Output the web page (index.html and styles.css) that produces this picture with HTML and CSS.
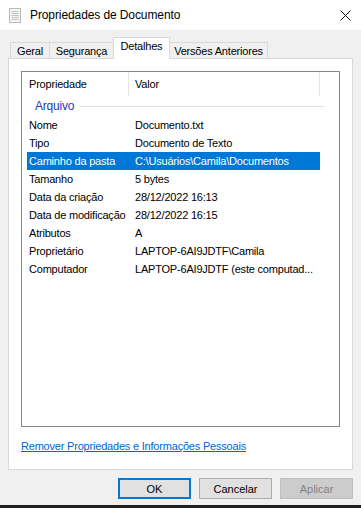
FILE: index.html
```html
<!DOCTYPE html>
<html lang="pt-BR">
<head>
    <meta charset="UTF-8">
    <title>Propriedades de Documento</title>
    <link rel="stylesheet" href="styles.css">
</head>
<body>
    <div class="window">
        <div class="titlebar">
            <svg class="title-icon" width="12" height="15" viewBox="0 0 12 15">
                <rect x="0.5" y="0.5" width="11" height="14" fill="#f4f4f4" stroke="#b9b9b9"/>
                <line x1="2.5" y1="3.5" x2="9.5" y2="3.5" stroke="#c4c4c4"/>
                <line x1="2.5" y1="5.5" x2="9.5" y2="5.5" stroke="#c4c4c4"/>
                <line x1="2.5" y1="7.5" x2="9.5" y2="7.5" stroke="#c4c4c4"/>
                <line x1="2.5" y1="9.5" x2="9.5" y2="9.5" stroke="#c4c4c4"/>
                <line x1="2.5" y1="11.5" x2="9.5" y2="11.5" stroke="#c4c4c4"/>
            </svg>
            <span class="title">Propriedades de Documento</span>
            <svg class="close" width="11" height="11" viewBox="0 0 11 11">
                <path d="M0.5 0.5 L10.5 10.5 M10.5 0.5 L0.5 10.5" stroke="#111" stroke-width="1"/>
            </svg>
        </div>

        <div class="content">
            <div class="tabs">
                <div class="tab tab-geral">Geral</div>
                <div class="tab tab-seg">Segurança</div>
                <div class="tab tab-det active">Detalhes</div>
                <div class="tab tab-ver">Versões Anteriores</div>
            </div>

            <div class="panel">
                <div class="list">
                    <div class="list-header">
                        <div class="col col-prop">Propriedade</div>
                        <div class="col col-val">Valor</div>
                        <div class="col col-rest"></div>
                    </div>

                    <div class="group">
                        <span class="group-name">Arquivo</span>
                        <span class="group-line"></span>
                    </div>

                    <div class="row"><span class="prop">Nome</span><span class="val">Documento.txt</span></div>
                    <div class="row"><span class="prop">Tipo</span><span class="val">Documento de Texto</span></div>
                    <div class="row selected"><span class="prop">Caminho da pasta</span><span class="val">C:\Usuários\Camila\Documentos</span></div>
                    <div class="row"><span class="prop">Tamanho</span><span class="val">5 bytes</span></div>
                    <div class="row"><span class="prop">Data da criação</span><span class="val">28/12/2022 16:13</span></div>
                    <div class="row"><span class="prop">Data de modificação</span><span class="val">28/12/2022 16:15</span></div>
                    <div class="row"><span class="prop">Atributos</span><span class="val">A</span></div>
                    <div class="row"><span class="prop">Proprietário</span><span class="val">LAPTOP-6AI9JDTF\Camila</span></div>
                    <div class="row"><span class="prop">Computador</span><span class="val">LAPTOP-6AI9JDTF (este computad...</span></div>
                </div>

                <a class="link" href="#">Remover Propriedades e Informações Pessoais</a>
            </div>

            <div class="buttons">
                <button class="button default">OK</button>
                <button class="button">Cancelar</button>
                <button class="button" disabled>Aplicar</button>
            </div>
        </div>
        <div class="bottom-edge"></div>
    </div>
</body>
</html>
```

FILE: styles.css
```css
body {
    margin: 0;
    font-family: "Liberation Sans", Arial, sans-serif;
    font-size: 11px;
    letter-spacing: -0.2px;
    color: #000;
    background: #f0f0f0;
}

.window {
    width: 361px;
    height: 508px;
    display: flex;
    flex-direction: column;
    background: #f0f0f0;
}

.titlebar {
    height: 30px;
    background: #fff;
    display: flex;
    align-items: center;
    padding-left: 9px;
    padding-right: 10px;
    flex-shrink: 0;
}

.title-icon {
    margin-right: 9px;
}

.title {
    flex: 1;
    font-size: 12px;
    letter-spacing: -0.1px;
}

.content {
    flex: 1;
    padding: 7px 8px 0 8px;
    display: flex;
    flex-direction: column;
}

.tabs {
    display: flex;
    align-items: flex-end;
    height: 21px;
    padding-left: 2px;
    position: relative;
    z-index: 1;
}

.tab {
    box-sizing: border-box;
    height: 16px;
    border: 1px solid #d9d9d9;
    border-bottom: none;
    background: #f0f0f0;
    text-align: center;
    line-height: 16px;
    margin-left: -1px;
    white-space: nowrap;
}

.tab-geral { width: 40px; margin-left: 0; }
.tab-seg { width: 65px; }
.tab-det { width: 57px; }
.tab-ver { width: 99px; }

.tab.active {
    height: 22px;
    background: #fff;
    margin-bottom: -1px;
    line-height: 16px;
    position: relative;
    z-index: 2;
}

.panel {
    box-sizing: border-box;
    width: 345px;
    height: 412px;
    background: #fff;
    border: 1px solid #d9d9d9;
    padding: 12px 12px 0 12px;
    display: flex;
    flex-direction: column;
}

.list {
    box-sizing: border-box;
    height: 356px;
    border: 1px solid #828790;
    background: #fff;
}

.list-header {
    display: flex;
    height: 24px;
}

.col {
    box-sizing: border-box;
    line-height: 24px;
    border-right: 1px solid #e5e5e5;
}

.col-prop {
    width: 107px;
    padding-left: 7px;
}

.col-val {
    width: 191px;
    padding-left: 6px;
}

.col-rest {
    flex: 1;
    border-right: none;
}

.group {
    display: flex;
    align-items: center;
    height: 20px;
    padding-left: 13px;
}

.group-name {
    color: #1e3cb4;
    font-size: 12px;
    margin-right: 6px;
}

.group-line {
    width: 244px;
    height: 1px;
    background: #e2e2e2;
}

.row {
    display: flex;
    height: 18px;
    line-height: 18px;
    margin-left: 5px;
    width: 293px;
    white-space: nowrap;
}

.row.selected {
    background: #0078d7;
    color: #fff;
}

.prop {
    box-sizing: border-box;
    width: 108px;
    flex-shrink: 0;
    padding-left: 2px;
    overflow: hidden;
}

.val {
    flex: 1;
    overflow: hidden;
}

.link {
    margin-top: 12px;
    color: #0066cc;
    text-decoration: underline;
    line-height: 14px;
    align-self: flex-start;
}

.buttons {
    display: flex;
    justify-content: flex-end;
    gap: 8px;
    margin-top: 8px;
    width: 345px;
}

.button {
    box-sizing: border-box;
    width: 73px;
    height: 21px;
    border: 1px solid #adadad;
    background: #e1e1e1;
    font-family: "Liberation Sans", Arial, sans-serif;
    font-size: 11px;
    color: #000;
    padding: 0;
}

.button.default {
    border: 2px solid #0078d7;
}

.button:disabled {
    background: #cccccc;
    border-color: #bfbfbf;
    color: #838383;
}

.bottom-edge {
    height: 3px;
    background: #1f1f1f;
    flex-shrink: 0;
}
```
